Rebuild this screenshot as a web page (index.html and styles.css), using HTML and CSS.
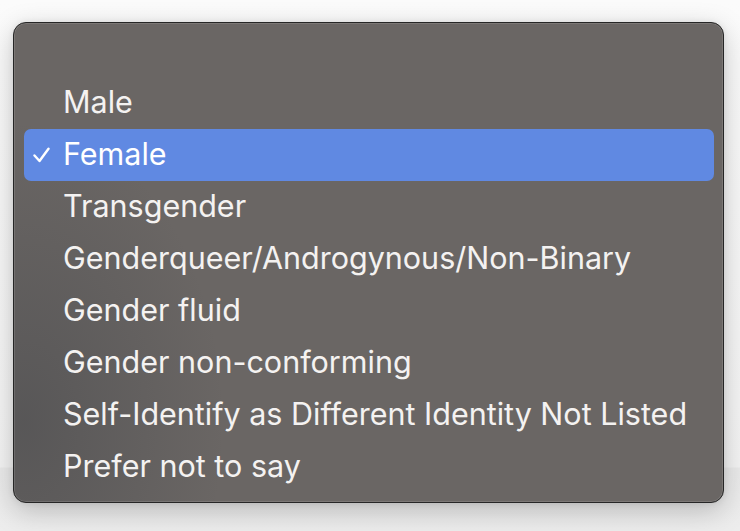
FILE: index.html
```html
<!DOCTYPE html>
<html>
<head>
<meta charset="utf-8">
<link rel="stylesheet" href="styles.css">
</head>
<body>
<div class="stage">
  <div class="menu">
    <ul class="list">
      <li class="item">Male</li>
      <li class="item selected"><svg class="check" width="17" height="16" viewBox="0 0 17 16"><polyline points="1.5,8.5 6.5,14 15.5,1.8" fill="none" stroke="#fff" stroke-width="2.4" stroke-linecap="round" stroke-linejoin="round"/></svg>Female</li>
      <li class="item">Transgender</li>
      <li class="item">Genderqueer/Androgynous/Non-Binary</li>
      <li class="item">Gender fluid</li>
      <li class="item">Gender non-conforming</li>
      <li class="item">Self-Identify as Different Identity Not Listed</li>
      <li class="item">Prefer not to say</li>
    </ul>
  </div>
</div>
</body>
</html>
```
FILE: styles.css
```css
html, body {
  margin: 0;
  padding: 0;
}
body {
  width: 740px;
  height: 531px;
  overflow: hidden;
  background: linear-gradient(to bottom, #fbfbfb 0, #f4f4f4 467px, #ebebeb 468px, #ededed 531px);
}
.stage {
  padding: 22px 0 0 13px;
}
.menu {
  width: 709px;
  height: 479px;
  border: 1px solid #262626;
  border-radius: 13px;
  background:
    radial-gradient(ellipse 200px 300px at 10px 400px, rgba(66,68,72,0.45), rgba(66,68,72,0) 100%),
    #6a6664;
  box-shadow: inset 0 0 0 1px rgba(255,255,255,0.12), 0 8px 28px rgba(0,0,0,0.22), 0 0 6px rgba(0,0,0,0.08);
  font-family: Inter, "Liberation Sans", sans-serif;
  color: #f4f2f1;
}
.list {
  list-style: none;
  margin: 0;
  padding: 54px 9px 0 10px;
}
.item {
  position: relative;
  height: 52px;
  line-height: 50px;
  padding-left: 39px;
  font-size: 30.5px;
  white-space: nowrap;
  border-radius: 7px;
}
.selected {
  background: #6089e2;
  color: #ffffff;
}
.check {
  position: absolute;
  left: 9px;
  top: 18px;
}
```
